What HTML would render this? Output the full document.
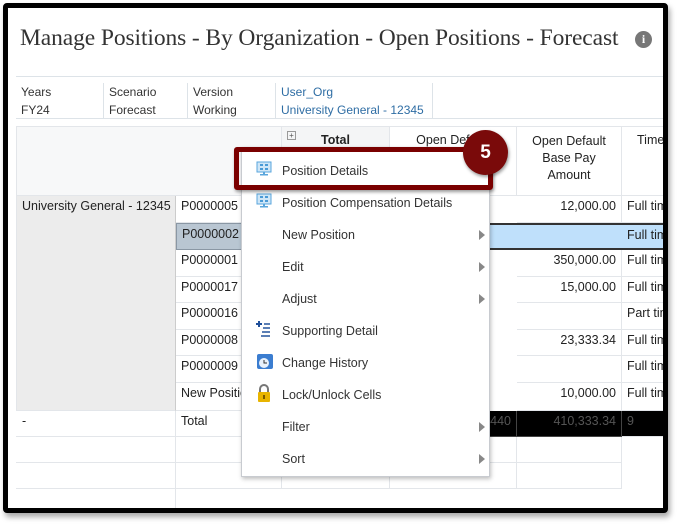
<!DOCTYPE html>
<html><head><style>
*{margin:0;padding:0;box-sizing:border-box}
body{width:680px;height:525px;background:#fff;position:relative;overflow:hidden;font-family:"Liberation Sans",sans-serif;font-size:12.5px;color:#222}
.frame{position:absolute;left:3px;top:3px;width:665px;height:510px;border:5px solid #000;border-radius:4px;background:#fff;box-shadow:2px 4px 6px rgba(0,0,0,.35);overflow:hidden}
.a{position:absolute}
.title{left:12px;top:17px;font-family:"Liberation Serif",serif;font-size:23.5px;color:#333;letter-spacing:-.1px}
.info{left:627px;top:23px;width:17px;height:17px;border-radius:50%;background:#777;color:#fff;font:bold 12px "Liberation Serif",serif;text-align:center;line-height:17px}
.pov{left:8px;top:68px;width:660px;height:43px;border-top:1px solid #dde3e8;border-bottom:1px solid #dde3e8}
.pc{position:absolute;top:6px;height:36px;border-right:1px solid #dde3e8;padding-left:5px;font-size:12px;line-height:18px;color:#333}
.grid{left:8px;top:118px;width:660px;height:400px}
.c{position:absolute;border-right:1px solid #e3e6ea;border-bottom:1px solid #e3e6ea;font-size:12.5px;line-height:14px;padding:3px 5px;white-space:nowrap;overflow:hidden}
.r{text-align:right}
.menu{left:233px;top:139px;width:249px;height:330px;background:#fff;border:1px solid #c8cbd0;box-shadow:1px 2px 4px rgba(0,0,0,.25)}
.mi{position:absolute;left:40px;font-size:12.5px;color:#333}
.arr{position:absolute;left:237px;width:0;height:0;border-top:5px solid transparent;border-bottom:5px solid transparent;border-left:6px solid #888}
.ic{position:absolute;left:14px}
</style></head><body>
<div class="frame">
<div class="a title">Manage Positions - By Organization - Open Positions - Forecast</div>
<div class="a info">i</div>
<div class="a pov">
<div class="pc" style="left:0;width:88px">Years<br>FY24</div>
<div class="pc" style="left:88px;width:84px">Scenario<br>Forecast</div>
<div class="pc" style="left:172px;width:88px">Version<br>Working</div>
<div class="pc" style="left:260px;width:157px;color:#2e6da4">User_Org<br>University General - 12345</div>
</div>
<div class="a grid">
<div class="c" style="left:0;top:0;width:266px;height:70px;border-top:1px solid #e3e6ea;border-left:1px solid #e3e6ea;background:#f7f8f9"></div>
<div class="c" style="left:266px;top:0;width:108px;height:70px;border-top:1px solid #e3e6ea;background:#f4f5f6;text-align:center;font-weight:bold;padding-top:6px"><span style="position:absolute;left:5px;top:4px;width:9px;height:9px;border:1px solid #999;font-size:8px;line-height:7px;font-weight:normal;color:#555">+</span>Total</div>
<div class="c" style="left:374px;top:0;width:127px;height:70px;border-top:1px solid #e3e6ea;text-align:center;padding-top:6px">Open Default</div>
<div class="c" style="left:501px;top:0;width:105px;height:70px;border-top:1px solid #e3e6ea;text-align:center;padding-top:6px;line-height:17px;white-space:normal">Open Default Base Pay Amount</div>
<div class="c" style="left:606px;top:0;width:60px;height:70px;border-top:1px solid #e3e6ea;padding-top:6px;padding-left:15px">Time</div>
<div class="c" style="left:0;top:70px;width:160px;height:215px;background:#ececec;border-left:1px solid #e3e6ea;border-right:1px solid #ccc">University General - 12345</div>
<div class="c" style="left:0;top:285px;width:160px;height:26px;padding-left:6px">-</div>
<div class="c" style="left:0;top:311px;width:160px;height:26px"></div>
<div class="c" style="left:0;top:337px;width:160px;height:26px"></div>
<div class="c" style="left:0;top:363px;width:160px;height:26px"></div>
<div class="c" style="left:160px;top:70px;width:106px;height:27px">P0000005</div>
<div class="c" style="left:160px;top:97px;width:106px;height:27px;background:#b9c6d2;border:1px solid #8a97a4">P0000002</div>
<div class="c" style="left:160px;top:124px;width:106px;height:27px">P0000001</div>
<div class="c" style="left:160px;top:151px;width:106px;height:26px">P0000017</div>
<div class="c" style="left:160px;top:177px;width:106px;height:27px">P0000016</div>
<div class="c" style="left:160px;top:204px;width:106px;height:26px">P0000008</div>
<div class="c" style="left:160px;top:230px;width:106px;height:27px">P0000009</div>
<div class="c" style="left:160px;top:257px;width:106px;height:28px">New Position</div>
<div class="c" style="left:160px;top:285px;width:106px;height:26px">Total</div>
<div class="c" style="left:160px;top:311px;width:106px;height:26px"></div>
<div class="c" style="left:160px;top:337px;width:106px;height:26px"></div>
<div class="c" style="left:266px;top:311px;width:108px;height:26px"></div>
<div class="c" style="left:266px;top:337px;width:108px;height:26px"></div>
<div class="c" style="left:374px;top:311px;width:127px;height:26px"></div>
<div class="c" style="left:374px;top:337px;width:127px;height:26px"></div>
<div class="c" style="left:501px;top:311px;width:105px;height:26px"></div>
<div class="c" style="left:501px;top:337px;width:105px;height:26px"></div>
<div class="c r" style="left:501px;top:70px;width:105px;height:27px">12,000.00</div>
<div class="c" style="left:606px;top:70px;width:60px;height:27px">Full time</div>
<div class="a" style="left:374px;top:97px;width:292px;height:27px;background:#bfe0fb;border-top:2px solid #333;border-bottom:2px solid #333"></div>
<div class="c" style="left:606px;top:99px;width:60px;height:23px;border-bottom:none">Full time</div>
<div class="c r" style="left:501px;top:124px;width:105px;height:27px">350,000.00</div>
<div class="c" style="left:606px;top:124px;width:60px;height:27px">Full time</div>
<div class="c r" style="left:501px;top:151px;width:105px;height:26px">15,000.00</div>
<div class="c" style="left:606px;top:151px;width:60px;height:26px">Full time</div>
<div class="c r" style="left:501px;top:177px;width:105px;height:27px"></div>
<div class="c" style="left:606px;top:177px;width:60px;height:27px">Part time</div>
<div class="c r" style="left:501px;top:204px;width:105px;height:26px">23,333.34</div>
<div class="c" style="left:606px;top:204px;width:60px;height:26px">Full time</div>
<div class="c r" style="left:501px;top:230px;width:105px;height:27px"></div>
<div class="c" style="left:606px;top:230px;width:60px;height:27px">Full time</div>
<div class="c r" style="left:501px;top:257px;width:105px;height:28px">10,000.00</div>
<div class="c" style="left:606px;top:257px;width:60px;height:28px">Full time</div>
<div class="a" style="left:266px;top:285px;width:400px;height:26px;background:#000"></div>
<div class="c r" style="left:374px;top:285px;width:127px;height:26px;color:#555;border-color:#444">440</div>
<div class="c r" style="left:501px;top:285px;width:105px;height:26px;color:#555;border-color:#444">410,333.34</div>
<div class="c" style="left:606px;top:285px;width:60px;height:26px;color:#555">9</div>
</div>
<div class="a menu">
<svg class="ic" style="top:13px" width="16" height="16" viewBox="0 0 16 16"><rect x="1" y="1" width="14" height="10" fill="#cfe6f7" stroke="#5aa6dc"/><g fill="#4a9ad6"><rect x="4" y="3" width="3" height="2"/><rect x="9" y="3" width="3" height="2"/><rect x="4" y="7" width="3" height="2"/><rect x="9" y="7" width="3" height="2"/></g><rect x="7" y="11" width="2" height="2" fill="#5aa6dc"/><rect x="4" y="13" width="8" height="1.5" fill="#5aa6dc"/></svg>
<div class="mi" style="top:16px">Position Details</div>
<svg class="ic" style="top:45px" width="16" height="16" viewBox="0 0 16 16"><rect x="1" y="1" width="14" height="10" fill="#cfe6f7" stroke="#5aa6dc"/><g fill="#4a9ad6"><rect x="4" y="3" width="3" height="2"/><rect x="9" y="3" width="3" height="2"/><rect x="4" y="7" width="3" height="2"/><rect x="9" y="7" width="3" height="2"/></g><rect x="7" y="11" width="2" height="2" fill="#5aa6dc"/><rect x="4" y="13" width="8" height="1.5" fill="#5aa6dc"/></svg>
<div class="mi" style="top:48px">Position Compensation Details</div>
<div class="mi" style="top:80px">New Position</div><div class="arr" style="top:82px"></div>
<div class="mi" style="top:112px">Edit</div><div class="arr" style="top:114px"></div>
<div class="mi" style="top:144px">Adjust</div><div class="arr" style="top:146px"></div>
<svg class="ic" style="top:172px" width="16" height="18" viewBox="0 0 16 18"><path d="M3 1v6M0 4h6" stroke="#1f4f9a" stroke-width="2"/><g fill="#5b7fb5"><rect x="8" y="3" width="6" height="2"/><rect x="7" y="7" width="7" height="2"/><rect x="6" y="11" width="8" height="2"/><rect x="5" y="15" width="9" height="2"/></g></svg>
<div class="mi" style="top:176px">Supporting Detail</div>
<svg class="ic" style="top:205px" width="18" height="17" viewBox="0 0 18 17"><rect x="1" y="1" width="16" height="15" rx="2" fill="#3b7dd0"/><circle cx="8" cy="10" r="5" fill="#e8f1fb"/><path d="M8 7v3h3" stroke="#333" fill="none"/></svg>
<div class="mi" style="top:208px">Change History</div>
<svg class="ic" style="top:236px" width="16" height="19" viewBox="0 0 16 19"><path d="M4 8V5a4 4 0 0 1 8 0v3" stroke="#777" stroke-width="2" fill="none"/><rect x="2" y="8" width="12" height="10" rx="1" fill="#e8b400"/><rect x="7" y="11" width="2" height="4" fill="#7a5a00"/></svg>
<div class="mi" style="top:240px">Lock/Unlock Cells</div>
<div class="mi" style="top:272px">Filter</div><div class="arr" style="top:274px"></div>
<div class="mi" style="top:304px">Sort</div><div class="arr" style="top:306px"></div>
</div>
<div class="a" style="left:226px;top:139px;width:259px;height:43px;border:5px solid #7a0000;border-radius:3px;box-shadow:1px 2px 3px rgba(0,0,0,.4)"></div>
<div class="a" style="left:455px;top:122px;width:45px;height:45px;border-radius:50%;background:#7a0a0a;color:#fff;font:bold 19px 'Liberation Sans',sans-serif;text-align:center;line-height:45px;box-shadow:1px 2px 3px rgba(0,0,0,.4)">5</div>
</div>
</body></html>
